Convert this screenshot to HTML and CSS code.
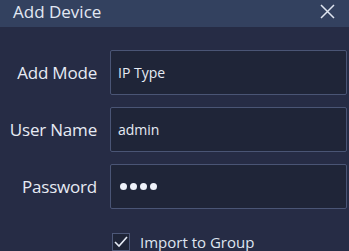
FILE: index.html
```html
<!DOCTYPE html>
<html lang="en">
<head>
    <meta charset="UTF-8">
    <title>Add Device</title>
    <link rel="stylesheet" href="styles.css">
</head>
<body>
    <div class="dialog">
        <div class="titlebar">
            <span class="title">Add Device</span>
            <svg class="close" width="15" height="15" viewBox="0 0 15 15"><path d="M1 1 L14 14 M14 1 L1 14" stroke="#dfe5f0" stroke-width="1.5" fill="none"/></svg>
        </div>
        <div class="form">
            <div class="row">
                <label>Add Mode</label>
                <div class="field">IP Type</div>
            </div>
            <div class="row">
                <label>User Name</label>
                <div class="field">admin</div>
            </div>
            <div class="row">
                <label>Password</label>
                <div class="field">
                    <span class="dot"></span><span class="dot"></span><span class="dot"></span><span class="dot"></span>
                </div>
            </div>
            <div class="check-row">
                <span class="checkbox">
                    <svg width="14" height="12" viewBox="0 0 14 12"><path d="M1 6 L5 10 L13 1" fill="none" stroke="#e6ebf5" stroke-width="1.6"/></svg>
                </span>
                <span class="check-label">Import to Group</span>
            </div>
        </div>
    </div>
</body>
</html>
```

FILE: styles.css
```css
body {
    margin: 0;
    background-color: #262c45;
    font-family: "Open Sans", "Noto Sans", sans-serif;
    color: #e3e8f2;
    width: 349px;
    height: 251px;
    overflow: hidden;
}
.titlebar {
    height: 27px;
    background-color: #33415f;
    display: flex;
    align-items: center;
    justify-content: space-between;
    padding: 0 14px 0 13px;
}
.title {
    font-size: 17px;
    color: #e2e8f3;
    margin-top: -4px;
}
.close {
    margin-top: -5px;
}
.form {
    padding-top: 23px;
}
.row {
    display: flex;
    align-items: center;
    margin-bottom: 12px;
}
.row label {
    width: 97px;
    text-align: right;
    font-size: 17px;
    letter-spacing: -0.2px;
    color: #e6ebf4;
}
.field {
    margin-left: 13px;
    width: 228px;
    height: 43px;
    background-color: #1f2538;
    border: 1px solid #4a5575;
    border-radius: 2px;
    display: flex;
    align-items: center;
    padding-left: 7px;
    font-size: 14px;
    color: #e6ebf4;
}
.dot {
    width: 7px;
    height: 7px;
    border-radius: 50%;
    background-color: #eef2fa;
    margin-left: 3px;
}
.dot:first-child {
    margin-left: 2px;
}
.check-row {
    display: flex;
    align-items: center;
    padding-left: 112px;
    margin-top: 23px;
}
.checkbox {
    width: 16px;
    height: 16px;
    border: 1px solid #4d5878;
    background-color: #1f2538;
    display: flex;
    align-items: center;
    justify-content: center;
}
.check-label {
    margin-left: 10px;
    font-size: 15px;
    color: #dfe5f0;
}
```
